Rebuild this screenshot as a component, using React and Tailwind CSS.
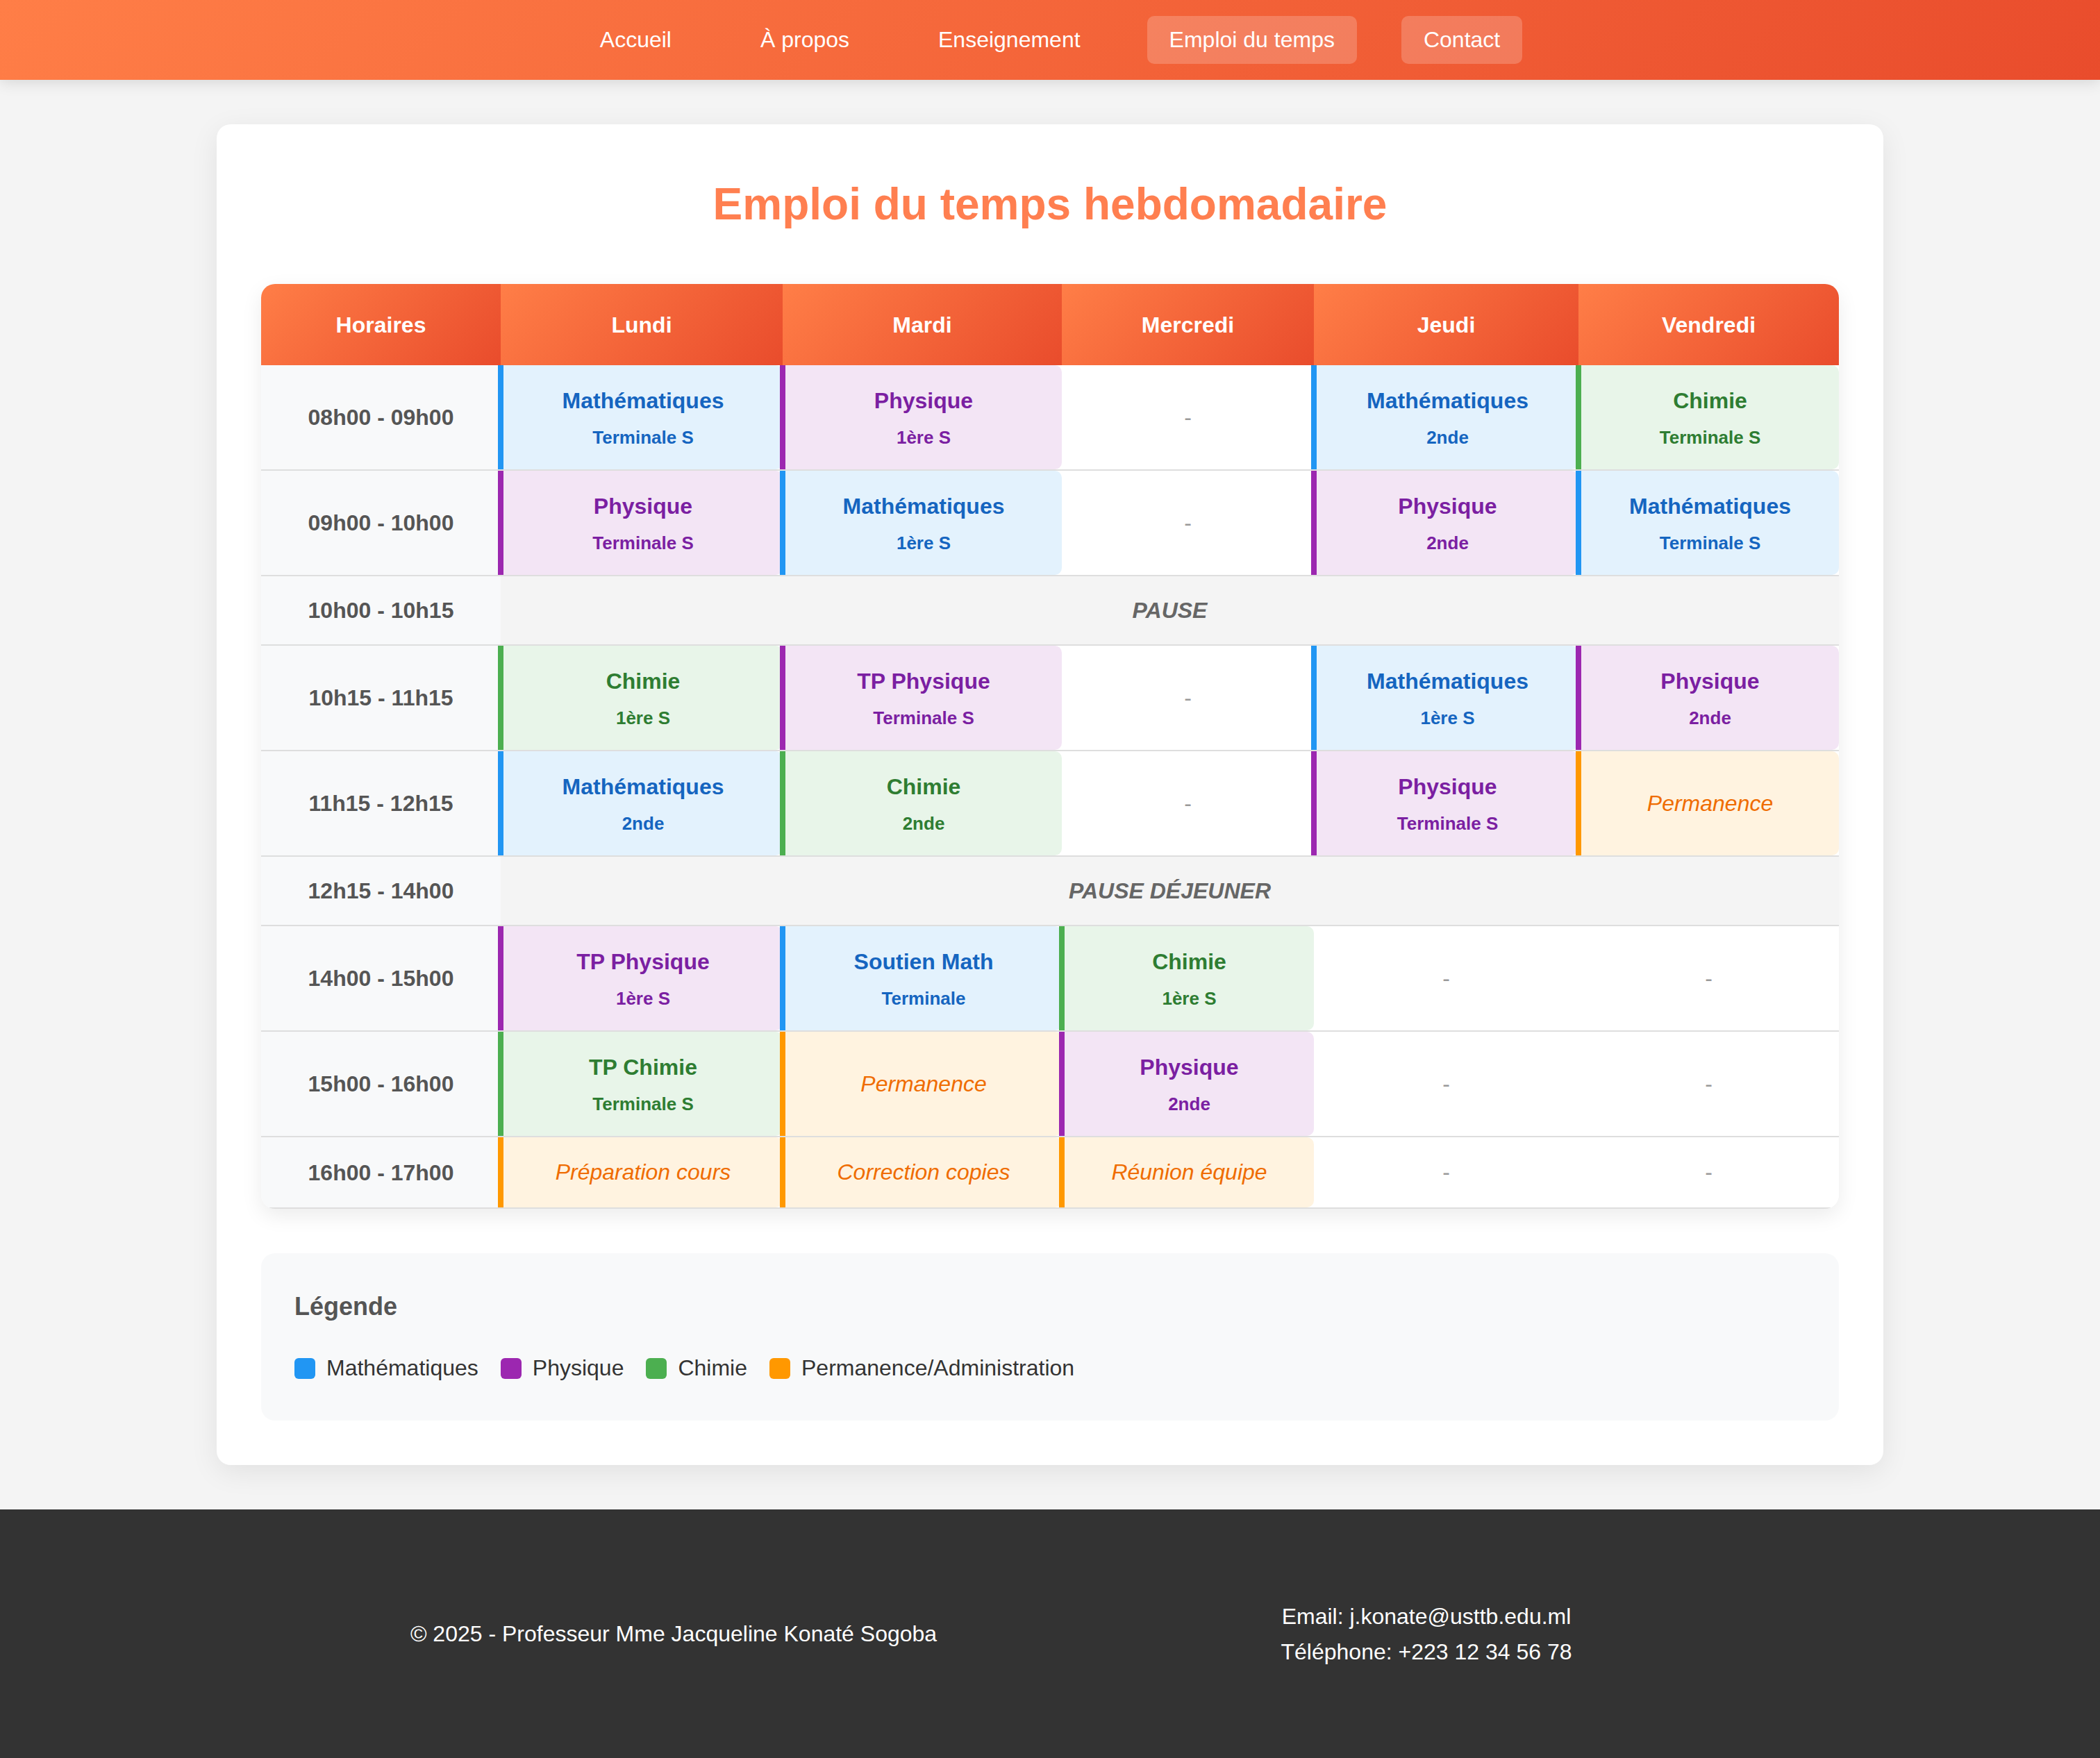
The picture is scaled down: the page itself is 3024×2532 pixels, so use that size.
const COLS = "grid-cols-[345px_406px_402px_363px_381px_375px]";

const TYPES = {
    math: { bg: "bg-[#e3f2fd]", border: "border-[#2196f3]", text: "text-[#1565c0]" },
    phys: { bg: "bg-[#f3e5f5]", border: "border-[#9c27b0]", text: "text-[#7b1fa2]" },
    chim: { bg: "bg-[#e8f5e9]", border: "border-[#4caf50]", text: "text-[#2e7d32]" },
    perm: { bg: "bg-[#fff3e0]", border: "border-[#ff9800]", text: "text-[#ef6c00]" },
};

const DAYS = ["Horaires", "Lundi", "Mardi", "Mercredi", "Jeudi", "Vendredi"];

const ROWS = [
    {
        time: "08h00 - 09h00",
        cells: [["math", "Mathématiques", "Terminale S"], ["phys", "Physique", "1ère S"], null, ["math", "Mathématiques", "2nde"], ["chim", "Chimie", "Terminale S"]],
    },
    {
        time: "09h00 - 10h00",
        cells: [["phys", "Physique", "Terminale S"], ["math", "Mathématiques", "1ère S"], null, ["phys", "Physique", "2nde"], ["math", "Mathématiques", "Terminale S"]],
    },
    { time: "10h00 - 10h15", pause: "PAUSE" },
    {
        time: "10h15 - 11h15",
        cells: [["chim", "Chimie", "1ère S"], ["phys", "TP Physique", "Terminale S"], null, ["math", "Mathématiques", "1ère S"], ["phys", "Physique", "2nde"]],
    },
    {
        time: "11h15 - 12h15",
        cells: [["math", "Mathématiques", "2nde"], ["chim", "Chimie", "2nde"], null, ["phys", "Physique", "Terminale S"], ["perm", "Permanence"]],
    },
    { time: "12h15 - 14h00", pause: "PAUSE DÉJEUNER" },
    {
        time: "14h00 - 15h00",
        cells: [["phys", "TP Physique", "1ère S"], ["math", "Soutien Math", "Terminale"], ["chim", "Chimie", "1ère S"], null, null],
    },
    {
        time: "15h00 - 16h00",
        cells: [["chim", "TP Chimie", "Terminale S"], ["perm", "Permanence"], ["phys", "Physique", "2nde"], null, null],
    },
    {
        time: "16h00 - 17h00",
        short: true,
        cells: [["perm", "Préparation cours"], ["perm", "Correction copies"], ["perm", "Réunion équipe"], null, null],
    },
];

const LEGEND = [
    ["bg-[#2196f3]", "Mathématiques"],
    ["bg-[#9c27b0]", "Physique"],
    ["bg-[#4caf50]", "Chimie"],
    ["bg-[#ff9800]", "Permanence/Administration"],
];

function Cell({ cell }) {
    if (!cell) {
        return (
            <div className="flex items-center justify-center bg-white text-[32px] leading-[51px] text-[#999]">
                -
            </div>
        );
    }
    const [type, subject, level] = cell;
    const t = TYPES[type];

    return (
        <div className={`-ml-[4px] flex flex-col items-center justify-center border-l-[8px] rounded-r-[10px] ${t.bg} ${t.border} ${t.text}`}>
            {level ? (
                <>
                    <div className="text-[32px] font-bold leading-[51px]">{subject}</div>
                    <div className="mt-[6px] text-[26px] font-bold leading-[42px]">{level}</div>
                </>
            ) : (
                <div className="text-[32px] italic leading-[51px]">{subject}</div>
            )}
        </div>
    );
}

export default function App() {
    return (
        <div className="min-h-screen bg-[#f4f4f4] font-['Liberation_Sans',Arial,sans-serif] text-[#333]">
            {/* Navigation */}
            <nav className="bg-[linear-gradient(135deg,#ff7e47,#e94c2c)] shadow-[0_4px_20px_rgba(0,0,0,0.12)] py-[23px]">
                <div className="flex justify-center gap-[64px]">
                    {["Accueil", "À propos", "Enseignement", "Emploi du temps", "Contact"].map((l, i) => (
                        <a
                            key={l}
                            href="#"
                            className={`rounded-[10px] px-[32px] py-[16px] text-[32px] leading-[37px] text-white ${i >= 3 ? "bg-white/20" : ""}`}
                        >
                            {l}
                        </a>
                    ))}
                </div>
            </nav>

            {/* Carte principale */}
            <main className="mx-auto my-[64px] w-[2400px] rounded-[20px] bg-white p-[64px] shadow-[0_10px_40px_rgba(0,0,0,0.08)]">
                <h2 className="mb-[64px] text-center text-[64px] font-bold leading-[102px] text-[#ff7f50]">
                    Emploi du temps hebdomadaire
                </h2>

                <div className="overflow-hidden rounded-[20px] bg-white shadow-[0_10px_30px_rgba(0,0,0,0.08)]">
                    <div className={`grid h-[117px] ${COLS}`}>
                        {DAYS.map((d) => (
                            <div
                                key={d}
                                className="flex items-center justify-center bg-[linear-gradient(135deg,#ff7e47,#e94c2c)] text-[32px] font-bold text-white"
                            >
                                {d}
                            </div>
                        ))}
                    </div>

                    {ROWS.map((row) => (
                        <div
                            key={row.time}
                            className={`grid border-b-2 border-[#dedede] ${COLS} ${row.pause ? "h-[100px]" : row.short ? "h-[103px]" : "h-[152px]"}`}
                        >
                            <div className="flex items-center justify-center bg-[#f8f9fa] text-[32px] font-bold text-[#555]">
                                {row.time}
                            </div>
                            {row.pause ? (
                                <div className="col-span-5 flex items-center justify-center bg-[#f4f4f4] text-[32px] font-bold italic text-[#666]">
                                    {row.pause}
                                </div>
                            ) : (
                                row.cells.map((c, i) => <Cell key={i} cell={c} />)
                            )}
                        </div>
                    ))}
                </div>

                {/* Légende */}
                <div className="mt-[64px] rounded-[20px] bg-[#f8f9fa] p-[48px] pb-[50px]">
                    <h3 className="mb-[34px] text-[36px] font-bold leading-[58px] text-[#555]">Légende</h3>
                    <div className="flex gap-[32px]">
                        {LEGEND.map(([c, l]) => (
                            <div key={l} className="flex items-center gap-[16px]">
                                <span className={`h-[30px] w-[30px] rounded-[6px] ${c}`}></span>
                                <span className="text-[32px] leading-[51px] text-[#333]">{l}</span>
                            </div>
                        ))}
                    </div>
                </div>
            </main>

            {/* Footer */}
            <footer className="flex h-[359px] items-center bg-[#333] text-white">
                <div className="mx-auto grid w-[2168px] grid-cols-2 items-center text-center text-[32px] leading-[51px]">
                    <p>© 2025 - Professeur Mme Jacqueline Konaté Sogoba</p>
                    <p>
                        Email: j.konate@usttb.edu.ml
                        <br />
                        Téléphone: +223 12 34 56 78
                    </p>
                </div>
            </footer>
        </div>
    );
}
